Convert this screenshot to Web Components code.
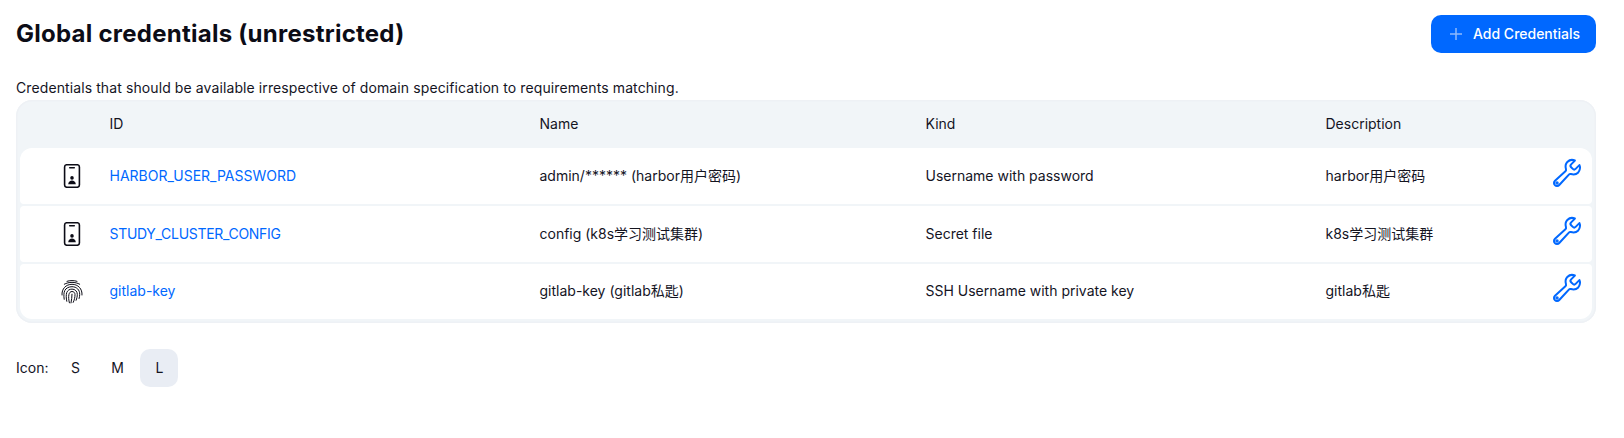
<!doctype html>
<html><head><meta charset="utf-8"><style>
html,body{margin:0;background:#fff}
body{font:14px/20px Inter,"Noto Sans CJK SC",sans-serif;color:#14141f}
</style></head><body>
<cred-page>
  <span slot="title">Global credentials (unrestricted)</span>
  <add-button slot="action">Add Credentials</add-button>
  <span slot="desc">Credentials that should be available irrespective of domain specification to requirements matching.</span>
  <cred-table>
    <cred-row icon="card"><a-id>HARBOR_USER_PASSWORD</a-id><span slot="name">admin/****** (harbor用户密码)</span><span slot="kind">Username with password</span><span slot="desc">harbor用户密码</span></cred-row>
    <cred-row icon="card"><a-id style="letter-spacing:-.3px">STUDY_CLUSTER_CONFIG</a-id><span slot="name">config (k8s学习测试集群)</span><span slot="kind">Secret file</span><span slot="desc">k8s学习测试集群</span></cred-row>
    <cred-row icon="finger"><a-id>gitlab-key</a-id><span slot="name">gitlab-key (gitlab私匙)</span><span slot="kind">SSH Username with private key</span><span slot="desc">gitlab私匙</span></cred-row>
  </cred-table>
  <icon-legend slot="legend"></icon-legend>
</cred-page>
<script>
const def=(n,html)=>customElements.define(n,class extends HTMLElement{connectedCallback(){if(this.shadowRoot)return;this.attachShadow({mode:'open'}).innerHTML=typeof html==='function'?html(this):html;}});
const COLS='73.5px 430px 386px 400px 1fr';
const ICONS={
card:`<svg width="24" height="24" viewBox="0 0 512 512" fill="none" stroke="currentColor" stroke-width="34" stroke-linecap="round" stroke-linejoin="round"><rect x="98" y="16" width="316" height="480" rx="48"/><path d="M208 80h96"/><circle cx="256" cy="296" r="38" fill="currentColor" stroke="none"/><path d="M174 432c6-54 44-80 82-80s76 26 82 80z" fill="currentColor" stroke="none"/></svg>`,
finger:`<svg width="24" height="24" viewBox="0 0 24 24" fill="none" stroke="currentColor" stroke-width="1" stroke-linecap="round"><path d="M7 1.300C10 .3 14 .3 17 1.300"/><path d="M4.300 4.200C9 1.700 15 1.700 19.700 4.200"/><path d="M2 15C1.500 8.800 6 4.300 12 4.300S22.500 8.800 22 15"/><path d="M4.200 19.300C3.600 15.500 3.800 12.700 4.800 10.500 6 8 9 6.700 12 6.700c4.600 0 7.800 3.200 7.700 7.600 0 1.400-.2 2.800-.6 4.200"/><path d="M6.800 21.300C6.100 18.200 6 15 6.700 12.700 7.500 10.300 9.600 9.100 12 9.100c3.200 0 5.300 2.300 5.300 5.300 0 2-.4 4-1.200 5.900"/><path d="M9.400 22.800C8.700 20 8.400 17.100 8.900 14.600 9.300 12.700 10.400 11.500 12 11.500c1.800 0 3 1.300 3 3 0 2.900-.6 5.500-1.800 7.900"/><path d="M12 14.200C12 17 11.600 19.800 11 22.900"/></svg>`,
wrench:`<svg width="32" height="32" viewBox="0 0 512 512" fill="none" stroke="currentColor" stroke-width="32" stroke-linecap="round" stroke-miterlimit="10"><path d="M393.870 190a32.100 32.100 0 01-45.250 0l-26.570-26.570a32.090 32.090 0 010-45.260L382.190 58a1 1 0 00-.3-1.640c-38.820-16.640-89.150-8.160-121.110 23.570-30.580 30.350-32.320 76-21.120 115.840a31.930 31.930 0 01-9.060 32.080L64 380a48.170 48.170 0 1068 68l153.860-167a31.930 31.930 0 0131.600-9.130c39.540 10.590 84.540 8.600 114.720-21.190 32.490-32 39.500-88.560 23.750-120.930a1 1 0 00-1.600-.26z"/><circle cx="96" cy="416" r="16" stroke-width="24"/></svg>`};
def('cred-page',`<style>
:host{display:block;padding:15px 28px 0 16px}
header{display:flex;justify-content:space-between;align-items:center;height:38px;font:700 24px/38px Inter,sans-serif;letter-spacing:.25px;color:#0c0c16}
.d{margin-top:25px;line-height:20px;height:20px;letter-spacing:.1px}
main{margin-top:2px}
.l{margin-top:26px}
</style><header><slot name="title"></slot><slot name="action"></slot></header><div class="d"><slot name="desc"></slot></div><main><slot></slot></main><div class="l"><slot name="legend"></slot></div>`);
def('add-button',`<style>
:host{display:flex;align-items:center;gap:10px;box-sizing:border-box;width:165px;height:38px;padding-left:18px;background:#0068ff;color:#fff;border-radius:10px;font:500 14px/20px Inter,sans-serif;letter-spacing:0}
svg{flex:none}
</style><svg width="14" height="14" viewBox="0 0 14 14" fill="none" stroke="#8fb9fb" stroke-width="1.500"><path d="M7 1v12M1 7h12"/></svg><span><slot></slot></span>`);
def('cred-table',`<style>
:host{display:block;background:#f1f5f8;border-radius:16px;padding:0 4px 4px;box-sizing:border-box;height:223px;box-shadow:inset 0 0 0 1.500px #eef1f5}
.h{display:grid;grid-template-columns:${COLS};height:48px;align-items:center}
.h span{padding-left:16px}
.b{display:flex;flex-direction:column;gap:2px}
</style><div class="h"><span></span><span>ID</span><span>Name</span><span>Kind</span><span>Description</span></div><div class="b"><slot></slot></div>`);
def('cred-row',h=>`<style>
:host{display:grid;grid-template-columns:${COLS};height:56px;align-items:center;background:#fff;border-radius:4px}
:host(:first-child){border-radius:12px 12px 4px 4px}
:host(:last-child){border-radius:4px 4px 12px 12px;height:55px;padding-bottom:0}
.c{padding-left:16px;min-width:0;white-space:nowrap}
.i{display:flex;padding-left:40px;color:#0c0c16}
.last{display:flex;justify-content:space-between;align-items:center;padding-right:9px}
.w{color:#0068ff;display:flex;margin-bottom:6px;height:32px}
:host(:last-child) .c{margin-bottom:1px}
:host(:last-child) .w{margin-bottom:7px}
</style><div class="i">${ICONS[h.getAttribute('icon')]}</div><div class="c"><slot></slot></div><div class="c"><slot name="name"></slot></div><div class="c"><slot name="kind"></slot></div><div class="c last"><slot name="desc"></slot><span class="w">${ICONS.wrench}</span></div>`);
def('a-id',`<style>:host{color:#0068ff}</style><slot></slot>`);
def('icon-legend',`<style>
:host{display:flex;align-items:center}
span{margin-right:8px}
b{font-weight:400;width:38px;height:38px;display:flex;align-items:center;justify-content:center;border-radius:10px;margin-left:4px}
b:first-of-type{margin-left:0}
.on{background:#e9edf4}
</style><span>Icon:</span><b>S</b><b>M</b><b class="on">L</b>`);
</script>
</body></html>
